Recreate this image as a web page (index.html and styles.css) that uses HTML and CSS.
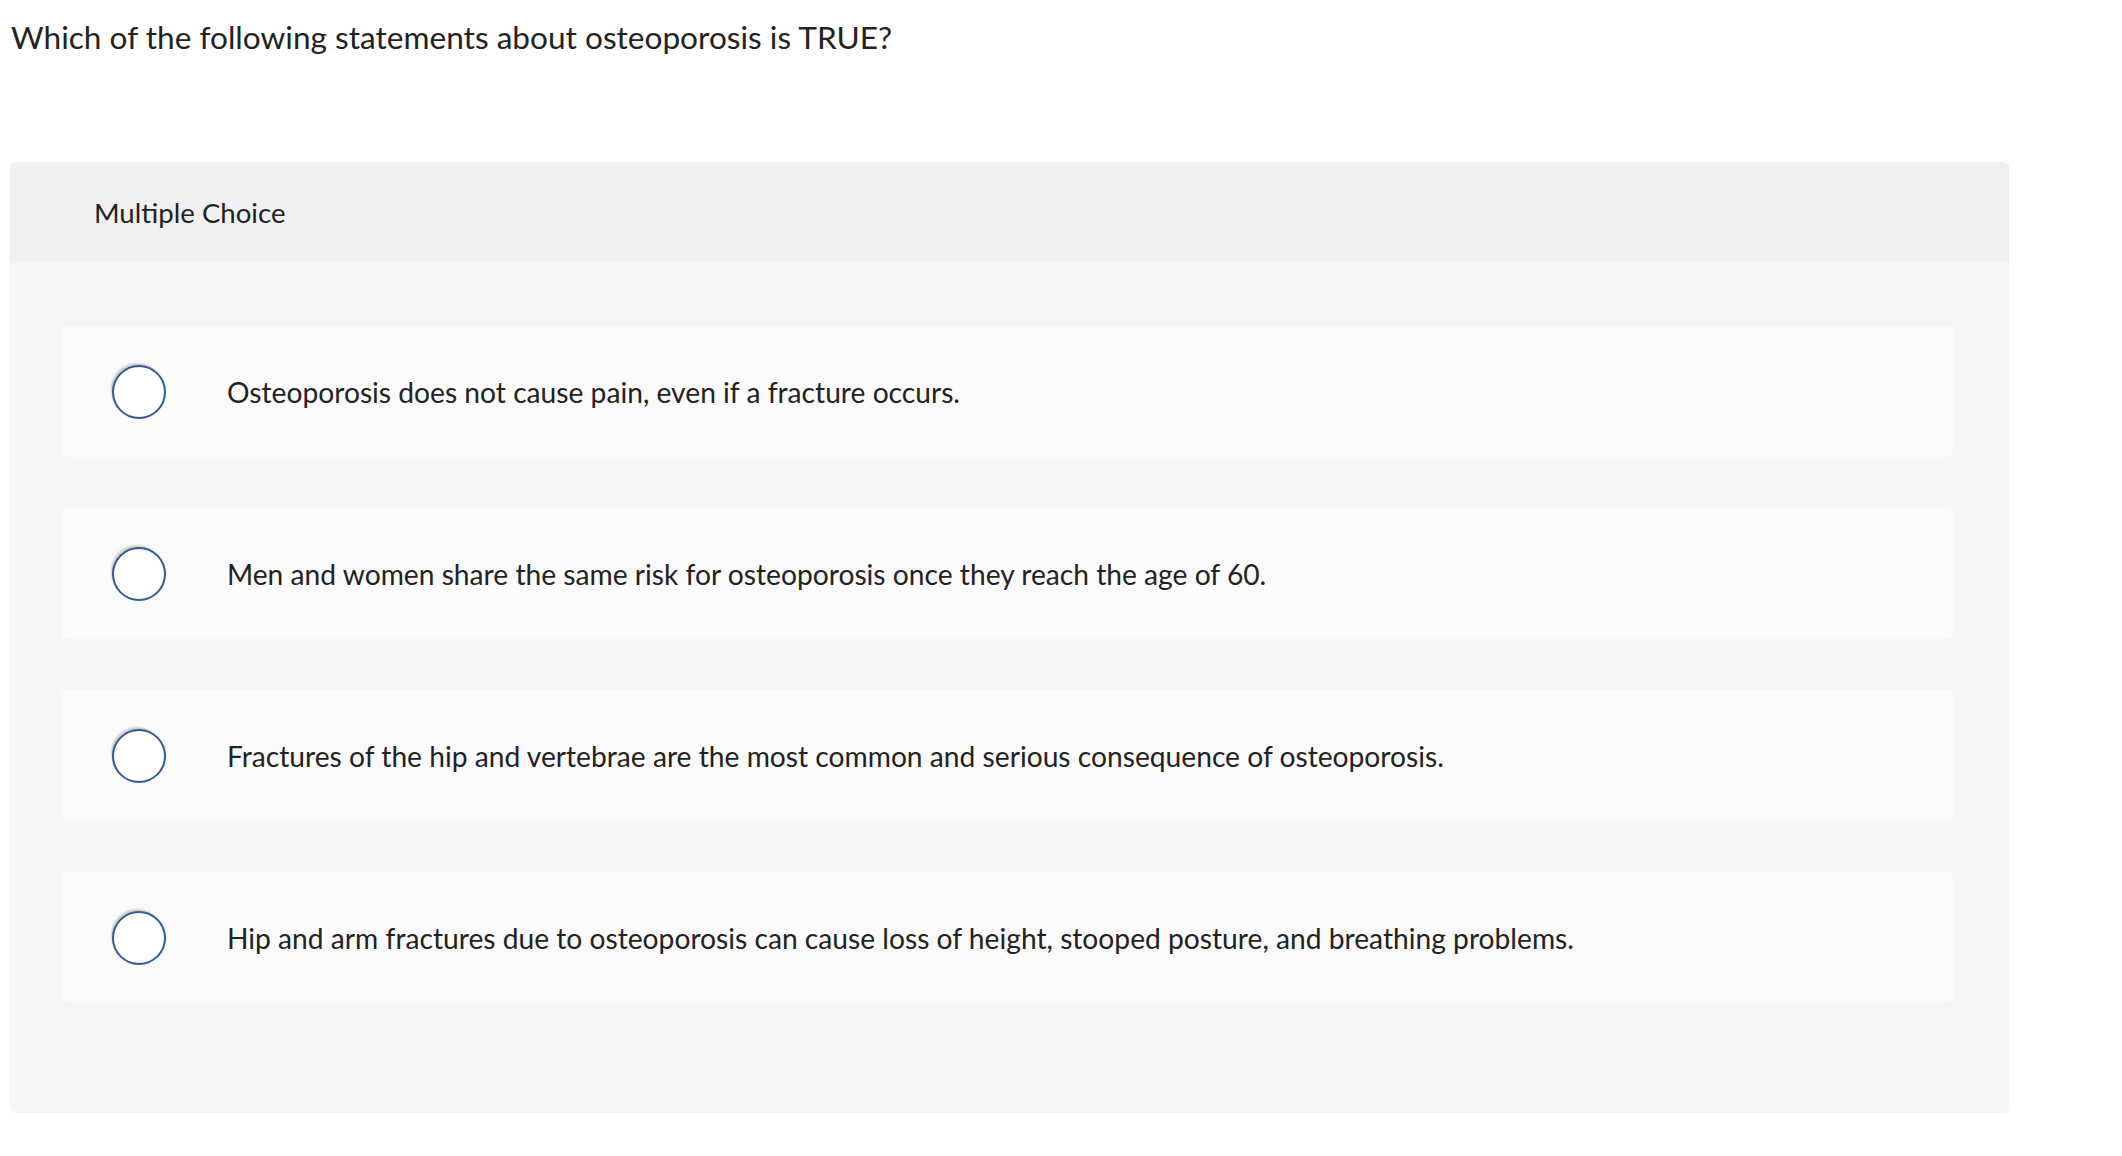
FILE: index.html
```html
<!DOCTYPE html>
<html lang="en">
<head>
<meta charset="utf-8">
<title>Multiple Choice</title>
<link rel="stylesheet" href="styles.css">
</head>
<body>
<main class="page">
  <h1 class="question">Which of the following statements about osteoporosis is TRUE?</h1>
  <section class="panel">
    <header class="panel-head">Multiple Choice</header>
    <div class="panel-body">
      <label class="choice"><span class="radio"></span><span class="choice-text">Osteoporosis does not cause pain, even if a fracture occurs.</span></label>
      <label class="choice"><span class="radio"></span><span class="choice-text">Men and women share the same risk for osteoporosis once they reach the age of 60.</span></label>
      <label class="choice"><span class="radio"></span><span class="choice-text">Fractures of the hip and vertebrae are the most common and serious consequence of osteoporosis.</span></label>
      <label class="choice"><span class="radio"></span><span class="choice-text">Hip and arm fractures due to osteoporosis can cause loss of height, stooped posture, and breathing problems.</span></label>
    </div>
  </section>
</main>
</body>
</html>
```
FILE: styles.css
```css
html, body {
  margin: 0;
  padding: 0;
  background: #ffffff;
}
body {
  font-family: Lato, "Liberation Sans", sans-serif;
  color: #222222;
}
.page {
  padding: 0 0 0 10px;
  width: 1999px;
}
.question {
  margin: 0;
  padding: 17px 0 0 1px;
  height: 162px;
  box-sizing: border-box;
  font-size: 31.6px;
  line-height: 40px;
  font-weight: 400;
}
.panel {
  border-radius: 6px;
  overflow: hidden;
  background: #f5f5f5;
}
.panel-head {
  height: 100px;
  background: #f0f0f0;
  display: flex;
  align-items: center;
  padding-left: 84px;
  font-size: 27.6px;
}
.panel-body {
  padding: 64px 56px 110px 52px;
  display: flex;
  flex-direction: column;
  gap: 51px;
}
.choice {
  height: 131px;
  background: #fafafa;
  border-radius: 5px;
  display: flex;
  align-items: center;
  padding-left: 50px;
  gap: 61px;
  font-size: 28.2px;
}
.radio {
  width: 50px;
  height: 50px;
  border: 2.5px solid #2d5b94;
  border-radius: 50%;
  background: #ffffff;
  flex: none;
  box-shadow: -2px -3px 2px -1px rgba(0, 0, 0, 0.18);
}
```
